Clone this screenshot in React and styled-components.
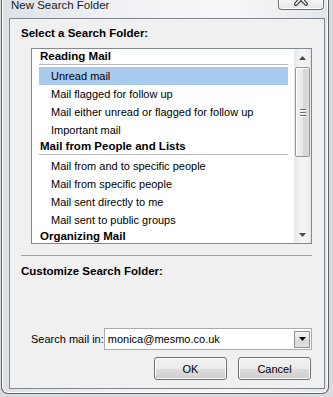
import React from "react"
import styled, { createGlobalStyle } from "styled-components"

const GlobalStyle = createGlobalStyle`
  html, body {
    margin: 0;
    padding: 0;
    background: #d9dbde;
    overflow: hidden;
  }
  body {
    font-family: "Liberation Sans", Arial, sans-serif;
    font-size: 11px;
    color: #000;
  }
`

const groups = [
  {
    title: "Reading Mail",
    items: [
      "Unread mail",
      "Mail flagged for follow up",
      "Mail either unread or flagged for follow up",
      "Important mail",
    ],
  },
  {
    title: "Mail from People and Lists",
    items: [
      "Mail from and to specific people",
      "Mail from specific people",
      "Mail sent directly to me",
      "Mail sent to public groups",
    ],
  },
  {
    title: "Organizing Mail",
    items: [],
  },
]

export default function App() {
  return (
    <>
      <GlobalStyle />
      <Window>
        <TitleBar>
          <Title>New Search Folder</Title>
          <CloseButton>
            <svg width="46" height="10" viewBox="0 0 46 10">
              <path d="M18 -7 L28 4 M28 -7 L18 4" stroke="#3c3c3c" strokeWidth="4" strokeLinecap="round" />
              <path d="M18 -7 L28 4 M28 -7 L18 4" stroke="#ffffff" strokeWidth="1.6" strokeLinecap="round" />
            </svg>
          </CloseButton>
        </TitleBar>

        <Client>
          <SectionLabel>Select a Search Folder:</SectionLabel>
          <ListBox>
            <ListItems>
              {groups.map((g) => (
                <React.Fragment key={g.title}>
                  <GroupHeader>{g.title}</GroupHeader>
                  {g.items.map((item, i) => (
                    <Item key={item} $selected={g.title === "Reading Mail" && i === 0}>
                      {item}
                    </Item>
                  ))}
                </React.Fragment>
              ))}
            </ListItems>
            <ScrollBar>
              <ScrollArrow>
                <svg width="7" height="4" viewBox="0 0 7 4"><path d="M0 4 L3.5 0 L7 4 Z" fill="#4a4a4a" /></svg>
              </ScrollArrow>
              <Track>
                <Thumb>
                  <Grip />
                  <Grip />
                  <Grip />
                </Thumb>
              </Track>
              <ScrollArrow>
                <svg width="7" height="4" viewBox="0 0 7 4"><path d="M0 0 L3.5 4 L7 0 Z" fill="#4a4a4a" /></svg>
              </ScrollArrow>
            </ScrollBar>
          </ListBox>

          <Separator />
          <SectionLabel $top={8}>Customize Search Folder:</SectionLabel>

          <Spacer />

          <SearchRow>
            <FieldLabel>Search mail in:</FieldLabel>
            <Combo>
              <ComboText>monica@mesmo.co.uk</ComboText>
              <ComboButton>
                <svg width="7" height="4" viewBox="0 0 7 4"><path d="M0 0 L3.5 4 L7 0 Z" fill="#000" /></svg>
              </ComboButton>
            </Combo>
          </SearchRow>

          <ButtonRow>
            <Button>OK</Button>
            <Button>Cancel</Button>
          </ButtonRow>
        </Client>
      </Window>
    </>
  )
}

const Window = styled.div`
  box-sizing: border-box;
  width: 328px;
  height: 394px;
  margin-left: 1px;
  display: flex;
  flex-direction: column;
  padding: 0 3px 4px 7px;
  border: 1px solid #5d6168;
  border-top: none;
  border-radius: 0 0 7px 7px;
  background: linear-gradient(90deg, #dde1e6 0%, #eef0f3 30%, #f6f7f8 70%, #e4e7ea 100%);
  box-shadow: inset 1px 0 0 #fbfcfd, inset -1px -1px 0 #fbfcfd;
`

const TitleBar = styled.div`
  height: 18px;
  display: flex;
  align-items: flex-start;
  justify-content: space-between;
  overflow: hidden;
`

const Title = styled.div`
  margin-top: -1px;
  margin-left: 2px;
  font-size: 11.5px;
  line-height: 12px;
  color: #1a1a1a;
`

const CloseButton = styled.div`
  box-sizing: border-box;
  width: 46px;
  height: 10px;
  margin-right: 1px;
  border: 1px solid #6d6f73;
  border-top: none;
  border-radius: 0 0 4px 4px;
  background: linear-gradient(180deg, #f4f5f6, #e3e5e8);
  box-shadow: inset 0 -1px 0 #fff, inset 1px 0 0 #fff, inset -1px 0 0 #fff;
  overflow: hidden;

  svg {
    display: block;
    margin-left: -1px;
  }
`

const Client = styled.div`
  box-sizing: border-box;
  width: 316px;
  height: 371px;
  display: flex;
  flex-direction: column;
  padding: 0 12px 8px 11px;
  border: 1px solid #80858c;
  background: #f0f0f0;
`

const SectionLabel = styled.div`
  margin-top: ${(p) => p.$top ?? 7}px;
  font-size: 11.5px;
  font-weight: bold;
  line-height: 15px;
`

const ListBox = styled.div`
  box-sizing: border-box;
  display: flex;
  width: 281px;
  height: 196px;
  margin: 7px 0 0 10px;
  border: 1px solid #828790;
  background: #fff;
  overflow: hidden;
`

const ListItems = styled.div`
  flex: 1;
  display: flex;
  flex-direction: column;
  padding: 0 6px 0 7px;
  overflow: hidden;
`

const GroupHeader = styled.div`
  flex: none;
  height: 15px;
  line-height: 15px;
  padding-left: 1px;
  margin-bottom: 2px;
  font-size: 11.5px;
  font-weight: bold;
  border-bottom: 1px solid #b9b9b9;
  white-space: nowrap;
`

const Item = styled.div`
  flex: none;
  height: 18px;
  line-height: 18px;
  padding-left: 12px;
  white-space: nowrap;
  background: ${(p) => (p.$selected ? "#a8cbee" : "transparent")};
`

const ScrollBar = styled.div`
  flex: none;
  width: 17px;
  display: flex;
  flex-direction: column;
  background: linear-gradient(90deg, #e6e6e6, #f4f4f4 40%, #f4f4f4 70%, #e9e9e9);
`

const ScrollArrow = styled.div`
  flex: none;
  height: 17px;
  display: flex;
  align-items: center;
  justify-content: center;
`

const Track = styled.div`
  flex: 1;
  padding-top: 1px;
`

const Thumb = styled.div`
  box-sizing: border-box;
  height: 90px;
  margin: 0 1px;
  display: flex;
  flex-direction: column;
  align-items: center;
  justify-content: center;
  gap: 2px;
  border: 1px solid #979797;
  border-radius: 2px;
  background: linear-gradient(90deg, #f1f1f1, #e8e8e8 50%, #d6d6d6 51%, #dcdcdc);
  box-shadow: inset 1px 1px 0 #fff;
`

const Grip = styled.div`
  width: 6px;
  height: 1px;
  background: #6e6e6e;
  box-shadow: 0 1px 0 #fff;
`

const Separator = styled.div`
  width: 291px;
  height: 1px;
  margin-top: 11px;
  background: #a0a0a0;
`

const Spacer = styled.div`
  flex: 1;
`

const SearchRow = styled.div`
  display: flex;
  align-items: center;
  padding-left: 10px;
`

const FieldLabel = styled.div`
  line-height: 15px;
  white-space: nowrap;
`

const Combo = styled.div`
  box-sizing: border-box;
  width: 209px;
  height: 22px;
  margin-left: auto;
  display: flex;
  align-items: center;
  padding: 0 1px 0 3px;
  border: 1px solid #a9abb0;
  background: #fff;
`

const ComboText = styled.div`
  flex: 1;
  white-space: nowrap;
`

const ComboButton = styled.div`
  box-sizing: border-box;
  width: 16px;
  height: 17px;
  display: flex;
  align-items: center;
  justify-content: center;
  border: 1px solid #8c8e92;
  background: linear-gradient(180deg, #f4f4f4, #e4e4e4 50%, #d8d8d8 51%, #e2e2e2);
`

const ButtonRow = styled.div`
  display: flex;
  justify-content: flex-end;
  gap: 11px;
  margin-top: 7px;
  padding-right: 1px;
`

const Button = styled.div`
  box-sizing: border-box;
  width: 73px;
  height: 23px;
  display: flex;
  align-items: center;
  justify-content: center;
  border: 1px solid #707070;
  border-radius: 3px;
  background: linear-gradient(180deg, #f2f2f2 0%, #ebebeb 50%, #dddddd 51%, #cfcfcf 100%);
  box-shadow: inset 0 0 0 1px #fbfbfb;
`
